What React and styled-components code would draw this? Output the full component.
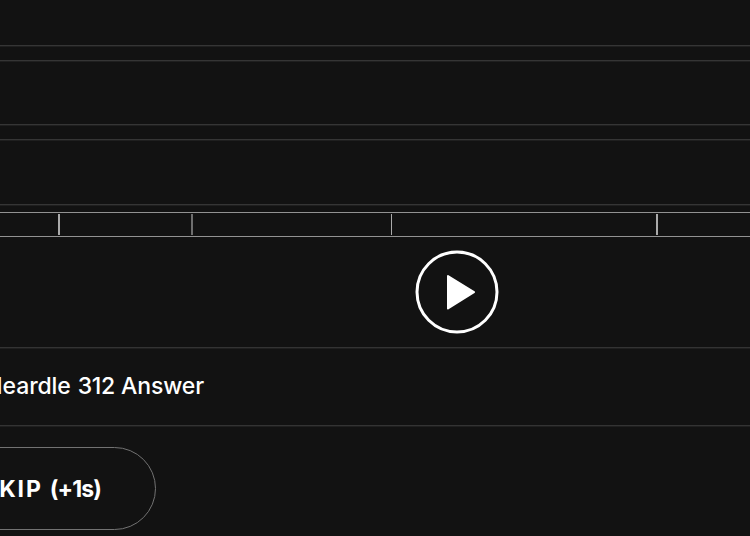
import React from "react";
import styled, { createGlobalStyle } from "styled-components";

const GlobalStyle = createGlobalStyle`
  * { box-sizing: border-box; }
  body { margin: 0; background: #121212; }
`;

const Page = styled.main`
  display: flex;
  flex-direction: column;
  width: 750px;
  height: 536px;
  overflow: hidden;
  background: #121212;
  color: #fff;
  font-family: Inter, "Liberation Sans", sans-serif;
`;

const Guesses = styled.section`
  display: flex;
  flex-direction: column;
  gap: 14px;
  flex: none;
  height: 212px;
`;

const GuessRow = styled.div`
  flex: none;
  height: ${({ $height }) => $height}px;
  border-top: ${({ $open }) => ($open ? "0" : "1px")} solid #353535;
  border-bottom: 1px solid #353535;
  box-shadow: 0 1px 0 #1f1f1f${({ $open }) => ($open ? "" : ", inset 0 1px 0 #1f1f1f")};
`;

const Timeline = styled.div`
  display: grid;
  grid-template-columns: 60px 133px 199px 266px 1fr;
  flex: none;
  height: 25px;
  padding: 1px 0;
  border-top: 1px solid #929292;
  border-bottom: 1px solid #929292;
`;

const Segment = styled.div`
  height: 21px;
  border-right: ${({ $tick }) => $tick || 0}px solid ${({ $tone }) => $tone || "#aaa"};
`;

const Player = styled.section`
  flex: none;
  height: 110px;
  padding: 13px 0 0 415px;
`;

const PlayButton = styled.button`
  display: block;
  width: 84px;
  height: 84px;
  padding: 0;
  border: 0;
  background: none;
  color: #fff;
`;

const SearchField = styled.div`
  display: flex;
  align-items: center;
  justify-content: flex-end;
  flex: none;
  width: 100%;
  height: 79px;
  padding: 0 546px 2px 0;
  border-top: 1px solid #333;
  border-bottom: 1px solid #333;
  box-shadow: 0 1px 0 #1f1f1f, inset 0 1px 0 #1f1f1f;
  font-size: 23px;
  font-weight: 500;
  line-height: 28px;
`;

const SkipButton = styled.button`
  display: flex;
  align-items: center;
  justify-content: flex-end;
  flex: none;
  width: 220px;
  height: 83px;
  margin: 21px 0 0 -64px;
  padding: 0 54px 0 0;
  border: 1px solid #727272;
  border-radius: 42px;
  background: none;
  color: #fff;
  font: 700 23px/28px Inter, "Liberation Sans", sans-serif;
`;

const Word = styled.span`
  white-space: pre;
  flex: none;
  letter-spacing: ${({ $tracking }) => $tracking || 0}px;
  margin-left: ${({ $gap }) => $gap || 0}px;
`;

export default function App() {
  return (
    <>
      <GlobalStyle />
      <Page>
        <Guesses>
          <GuessRow $height={46} $open />
          <GuessRow $height={65} />
          <GuessRow $height={66} />
        </Guesses>
        <Timeline>
          <Segment $tick={2} />
          <Segment $tick={2} $tone="#6e6e6e" />
          <Segment $tick={1} />
          <Segment $tick={2} />
          <Segment />
        </Timeline>
        <Player>
          <PlayButton aria-label="Play">
            <svg width="84" height="84" viewBox="0 0 84 84">
              <circle cx="42" cy="42" r="40" fill="none" stroke="currentColor" strokeWidth="3" />
              <path d="M33 26L59 42.2L33 58.5Z" fill="currentColor" stroke="currentColor" strokeWidth="2" strokeLinejoin="round" />
            </svg>
          </PlayButton>
        </Player>
        <SearchField>
          <Word $tracking={-0.1}>Heardle</Word>
          <Word $gap={7} $tracking={-0.3}>312</Word>
          <Word $gap={6} $tracking={-0.1}>Answer</Word>
        </SearchField>
        <SkipButton>
          <Word $tracking={1.9}>SKIP</Word>
          <Word $gap={7} $tracking={-0.9}>(+1s)</Word>
        </SkipButton>
      </Page>
    </>
  );
}
